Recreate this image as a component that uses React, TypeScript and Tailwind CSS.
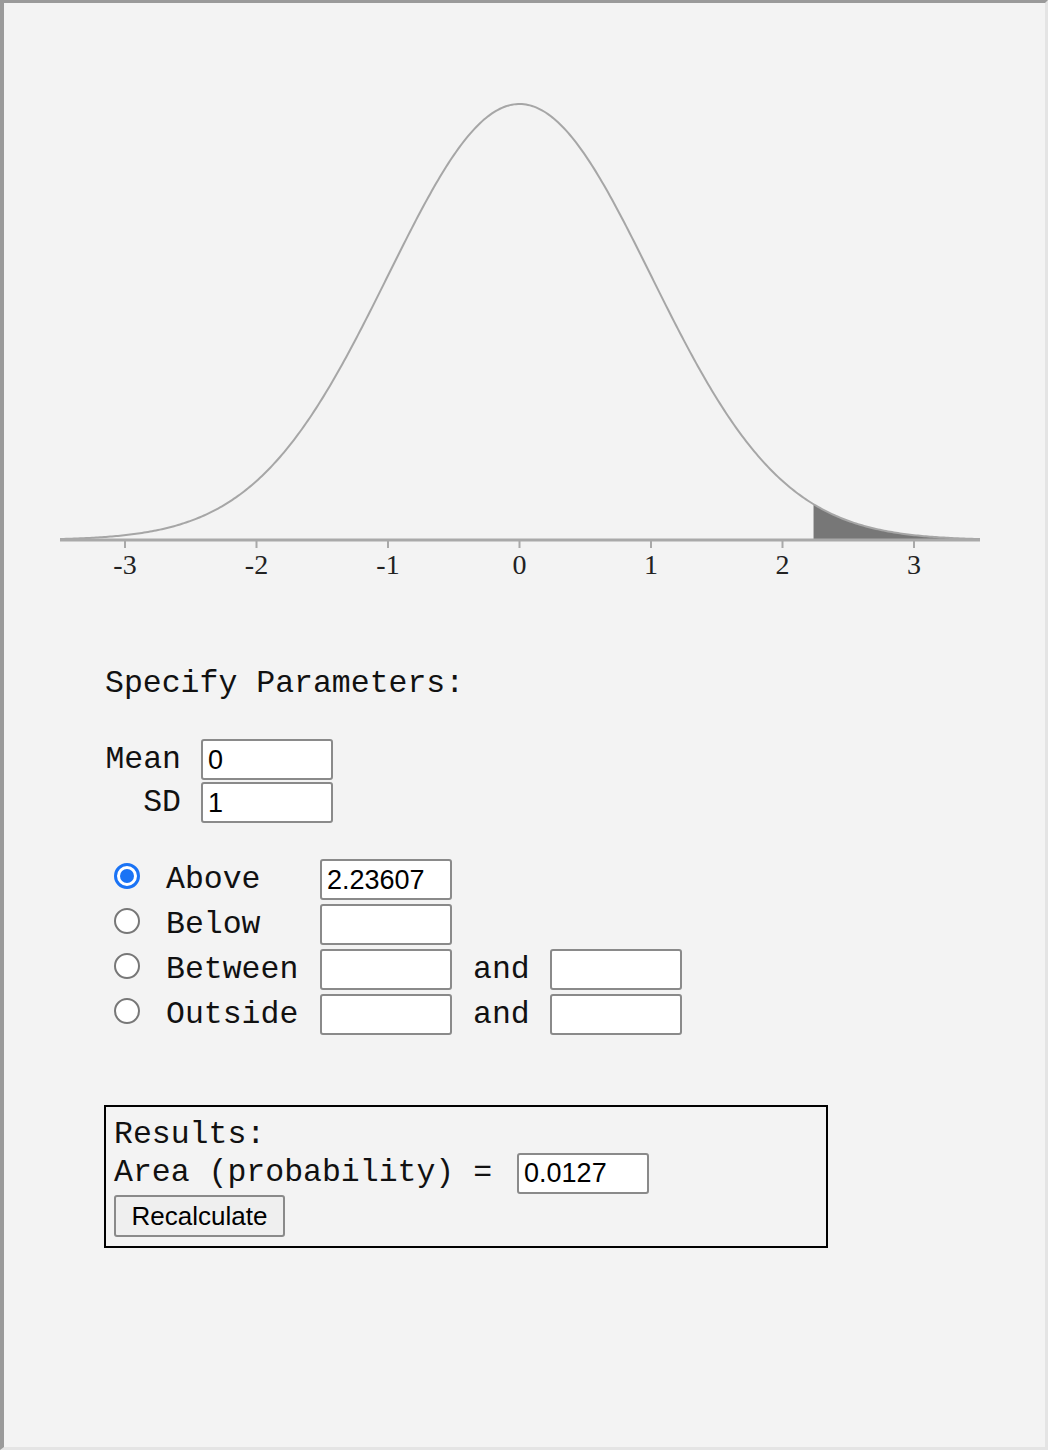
import React from 'react'

const MONO = "font-['Liberation_Mono','Courier_New',monospace]"
const SANS = "font-['Liberation_Sans',Arial,sans-serif]"

const CX = 519.5
const UNIT = 131.5
const BASE = 540
const PEAK = 436

function yAt(x: number) {
  const z = (x - CX) / UNIT
  return BASE - PEAK * Math.exp(-(z * z) / 2)
}

function curvePath(from: number, to: number) {
  const pts: string[] = []
  for (let x = from; x <= to; x += 2) {
    pts.push(`${x.toFixed(1)},${yAt(x).toFixed(2)}`)
  }
  pts.push(`${to},${yAt(to).toFixed(2)}`)
  return 'M' + pts.join(' L')
}

function Chart() {
  const cut = CX + 2.23607 * UNIT
  const shade = curvePath(Math.ceil(cut), 980)
  const ticks = [-3, -2, -1, 0, 1, 2, 3]
  return (
    <svg width={1041} height={600} className="block">
      <g transform="translate(-4,-3)">
        <path
          d={`M${cut},${BASE} L${cut},${yAt(cut)} ${shade.replace('M', 'L')} L980,${BASE} Z`}
          fill="#777777"
        />
        <path d={curvePath(60, 980)} fill="none" stroke="#a6a6a6" strokeWidth={2} />
        <line x1={60} y1={BASE} x2={980} y2={BASE} stroke="#a9a9a9" strokeWidth={3} />
        {ticks.map((t) => (
          <g key={t}>
            <line
              x1={CX + t * UNIT}
              y1={BASE}
              x2={CX + t * UNIT}
              y2={548}
              stroke="#a9a9a9"
              strokeWidth={2}
            />
            <text
              x={CX + t * UNIT}
              y={574}
              textAnchor="middle"
              fontFamily="'Liberation Serif', 'Times New Roman', serif"
              fontSize={28}
              fill="#222222"
            >
              {t}
            </text>
          </g>
        ))}
      </g>
    </svg>
  )
}

function Field({ value = '' }: { value?: string }) {
  return (
    <div
      className={`flex h-[41px] w-[132px] items-center rounded-[3px] border-2 border-[#8a8a8a] bg-white pl-[5px] text-[27px] text-black ${SANS}`}
    >
      {value}
    </div>
  )
}

function Radio({ checked = false }: { checked?: boolean }) {
  if (checked) {
    return (
      <span className="mb-[8px] flex h-[26px] w-[26px] items-center justify-center rounded-full border-[3px] border-[#1a73f5] bg-white">
        <span className="h-[14px] w-[14px] rounded-full bg-[#1a73f5]" />
      </span>
    )
  }
  return <span className="mb-[8px] h-[26px] w-[26px] rounded-full border-2 border-[#777] bg-white" />
}

const choices = [
  { label: 'Above', value: '2.23607', checked: true, pair: false },
  { label: 'Below', value: '', checked: false, pair: false },
  { label: 'Between', value: '', checked: false, pair: true },
  { label: 'Outside', value: '', checked: false, pair: true },
]

export default function App() {
  return (
    <div className="h-[1450px] w-[1048px] border-solid border-t-[3px] border-r-[3px] border-b-[3px] border-l-[4px] border-t-[#9a9a9a] border-l-[#9a9a9a] border-r-[#e4e4e4] border-b-[#e4e4e4] bg-[#f3f3f3] text-[#111]">
      <Chart />

      <div className={`pl-[101px] text-[31.5px] leading-[36px] ${MONO}`}>
        <p className="mt-[63px]">Specify Parameters:</p>

        <div className="mt-[37px] flex flex-col gap-[2px]">
          <div className="flex h-[41px] items-center">
            <span className="w-[76px] text-right">Mean</span>
            <div className="ml-[20px]">
              <Field value="0" />
            </div>
          </div>
          <div className="flex h-[41px] items-center">
            <span className="w-[76px] text-right">SD</span>
            <div className="ml-[20px]">
              <Field value="1" />
            </div>
          </div>
        </div>

        <div className="mt-[36px] flex flex-col gap-[4px]">
          {choices.map((c) => (
            <div key={c.label} className="flex h-[41px] items-center">
              <span className="ml-[9px] flex items-center">
                <Radio checked={c.checked} />
              </span>
              <span className="ml-[26px] w-[154px]">{c.label}</span>
              <Field value={c.value} />
              {c.pair && (
                <>
                  <span className="ml-[21px] w-[77px]">and</span>
                  <Field />
                </>
              )}
            </div>
          ))}
        </div>

        <div className="ml-[-1px] mt-[70px] w-[724px] border-2 border-black pt-[10px] pb-[9px] pl-[8px]">
          <p className="leading-[35px]">Results:</p>
          <div className="flex h-[42px] items-center">
            <span>Area (probability) =</span>
            <div className="ml-[25px]">
              <Field value="0.0127" />
            </div>
          </div>
          <button
            className={`mt-[1px] h-[42px] w-[171px] rounded-[3px] border-2 border-[#8a8a8a] bg-[#efefef] text-[26px] text-black ${SANS}`}
          >
            Recalculate
          </button>
        </div>
      </div>
    </div>
  )
}
